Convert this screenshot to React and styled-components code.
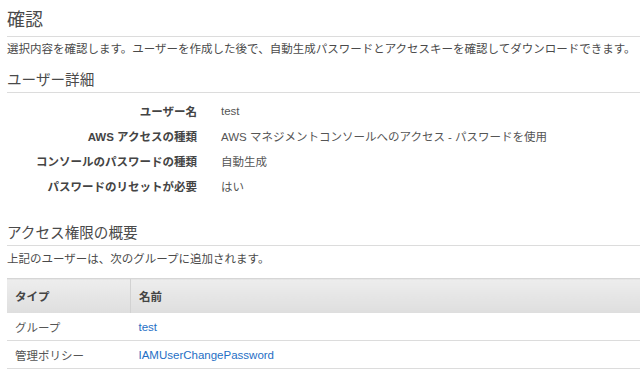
import React from 'react'
import styled, { createGlobalStyle } from 'styled-components'

const GlobalStyle = createGlobalStyle`
  body {
    margin: 0;
    background: #fff;
    font-family: "Liberation Sans", "Noto Sans CJK JP", sans-serif;
    color: #4a4a4a;
  }
`

const Page = styled.div`
  padding: 0 0 0 7px;
  width: 633px;
  overflow: hidden;
`

const Title = styled.h1`
  margin: 0;
  padding: 8px 0 4px;
  font-size: 18px;
  line-height: 24px;
  font-weight: normal;
  color: #4a4a4a;
  border-bottom: 1px solid #dcdcdc;
`

const Heading = styled.h2`
  margin: ${p => p.$top}px 0 0;
  padding: 0 0 2px;
  font-size: 14.6px;
  line-height: 20px;
  font-weight: normal;
  color: #4a4a4a;
  border-bottom: 1px solid #dcdcdc;
`

const Text = styled.p`
  margin: ${p => p.$top}px 0 0;
  font-size: 11.5px;
  line-height: 18px;
  white-space: nowrap;
`

const Details = styled.dl`
  margin: 5px 0 0;
  display: grid;
  grid-template-columns: 190px 1fr;
  column-gap: 24px;
  grid-auto-rows: 25px;
  align-items: center;
  font-size: 11.5px;
`

const Label = styled.dt`
  text-align: right;
  font-weight: bold;
  color: #444;
`

const Value = styled.dd`
  margin: 0;
  color: #555;
`

const Table = styled.table`
  margin-top: 10px;
  width: 100%;
  border-collapse: collapse;
  font-size: 11.5px;
`

const Th = styled.th`
  height: 34px;
  padding: 0 8px;
  text-align: left;
  font-weight: bold;
  color: #444;
  background: linear-gradient(#ededed, #dedede);
  border-top: 1px solid #d6d6d6;
  border-left: ${p => (p.$divider ? '1px solid #d2d2d2' : 'none')};
  width: ${p => p.$width || 'auto'};
`

const Td = styled.td`
  height: 27px;
  padding: 0 8px;
  border-bottom: 1px solid #dcdcdc;
  color: #555;
`

const Link = styled.a`
  color: #1f6fc5;
  text-decoration: none;
`

const details = [
  ['ユーザー名', 'test'],
  ['AWS アクセスの種類', 'AWS マネジメントコンソールへのアクセス - パスワードを使用'],
  ['コンソールのパスワードの種類', '自動生成'],
  ['パスワードのリセットが必要', 'はい'],
]

const permissions = [
  ['グループ', 'test'],
  ['管理ポリシー', 'IAMUserChangePassword'],
]

export default function App() {
  return (
    <Page>
      <GlobalStyle />
      <Title>確認</Title>
      <Text $top={3}>
        選択内容を確認します。ユーザーを作成した後で、自動生成パスワードとアクセスキーを確認してダウンロードできます。
      </Text>
      <Heading $top={12}>ユーザー詳細</Heading>
      <Details>
        {details.map(([label, value]) => (
          <React.Fragment key={label}>
            <Label>{label}</Label>
            <Value>{value}</Value>
          </React.Fragment>
        ))}
      </Details>
      <Heading $top={25}>アクセス権限の概要</Heading>
      <Text $top={4}>上記のユーザーは、次のグループに追加されます。</Text>
      <Table>
        <thead>
          <tr>
            <Th $width="107px">タイプ</Th>
            <Th $divider>名前</Th>
          </tr>
        </thead>
        <tbody>
          {permissions.map(([type, name]) => (
            <tr key={type}>
              <Td>{type}</Td>
              <Td><Link href="#">{name}</Link></Td>
            </tr>
          ))}
        </tbody>
      </Table>
    </Page>
  )
}
